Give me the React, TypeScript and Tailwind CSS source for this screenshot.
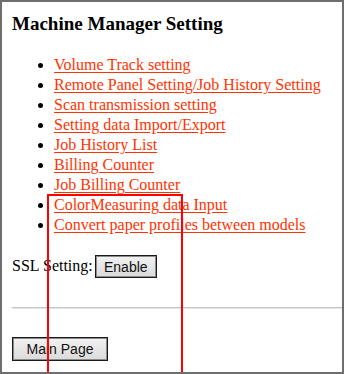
import React from "react";

const links = [
  "Volume Track setting",
  "Remote Panel Setting/Job History Setting",
  "Scan transmission setting",
  "Setting data Import/Export",
  "Job History List",
  "Billing Counter",
  "Job Billing Counter",
  "ColorMeasuring data Input",
  "Convert paper profiles between models",
];

export default function App() {
  return (
    <div
      className="relative w-[344px] h-[374px] border-2 border-[#6e6e6e] bg-white overflow-hidden text-black"
      style={{ fontFamily: '"Liberation Serif", "Times New Roman", serif' }}
    >
      <div className="pl-[10px] pt-[10px]">
        <h3 className="text-[19px] font-bold leading-[24px]">Machine Manager Setting</h3>
        <ul className="list-disc pl-[42px] mt-[19px] text-[16px] leading-[20px]">
          {links.map((l) => (
            <li key={l}>
              <a href="#" className="text-[#ff3300] underline underline-offset-[2px]">
                {l}
              </a>
            </li>
          ))}
        </ul>
        <div className="mt-[19px] flex items-end gap-[2px] text-[16px]">
          <span className="leading-normal">SSL Setting:</span>
          <button
            className="h-[23px] w-[62px] border border-[#1a1a1a] bg-gradient-to-b from-[#f2f2f2] to-[#dadada] shadow-[inset_0_0_0_1px_#8c8c8c] text-[14px] text-[#111] leading-none"
            style={{ fontFamily: '"Liberation Sans", Arial, sans-serif' }}
          >
            Enable
          </button>
        </div>
        <div className="mt-[29px] h-[2px] border-t border-[#c4c4c4] border-b border-b-[#e6e6e6]" />
        <button
          className="mt-[28px] h-[24px] w-[96px] border border-[#1a1a1a] bg-gradient-to-b from-[#f2f2f2] to-[#dadada] shadow-[inset_0_0_0_1px_#8c8c8c] text-[14px] text-[#111] leading-none"
          style={{ fontFamily: '"Liberation Sans", Arial, sans-serif' }}
        >
          Main Page
        </button>
      </div>
      <div className="absolute left-[45px] top-[192px] w-[136px] h-[200px] border-2 border-[#ff0000] pointer-events-none" />
    </div>
  );
}
